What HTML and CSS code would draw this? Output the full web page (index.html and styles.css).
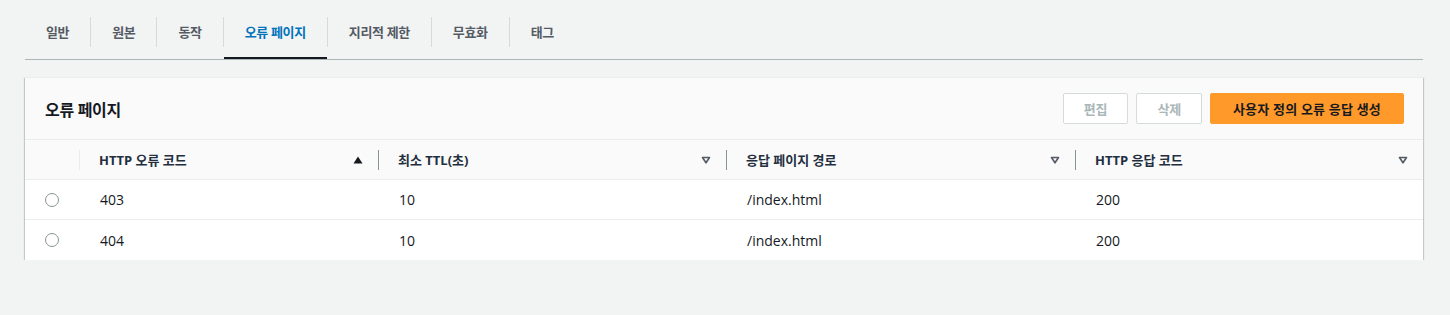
FILE: index.html
```html
<!DOCTYPE html>
<html lang="ko">
<head>
<meta charset="utf-8">
<title>오류 페이지</title>
<link rel="stylesheet" href="styles.css">
</head>
<body>
<nav class="tabs">
  <a class="tab">일반</a><span class="tab-sep"></span>
  <a class="tab">원본</a><span class="tab-sep"></span>
  <a class="tab">동작</a><span class="tab-sep"></span>
  <a class="tab active">오류 페이지</a><span class="tab-sep"></span>
  <a class="tab">지리적 제한</a><span class="tab-sep"></span>
  <a class="tab">무효화</a><span class="tab-sep"></span>
  <a class="tab">태그</a>
</nav>

<section class="card">
  <header class="card-head">
    <h2 class="card-title">오류 페이지</h2>
    <div class="actions">
      <button class="btn btn-disabled">편집</button>
      <button class="btn btn-disabled">삭제</button>
      <button class="btn btn-primary">사용자 정의 오류 응답 생성</button>
    </div>
  </header>

  <div class="grid">
    <div class="th th-select"></div>
    <div class="th"><span class="sep sep-light"></span><span class="th-label">HTTP 오류 코드</span>
      <svg class="sort" width="10" height="8" viewBox="0 0 10 8"><polygon points="0.5,7.5 5,0.5 9.5,7.5" fill="#16191f"/></svg></div>
    <div class="th"><span class="sep"></span><span class="th-label">최소 TTL(초)</span>
      <svg class="sort" width="10" height="8" viewBox="0 0 10 8"><polygon points="1.5,1.5 8.5,1.5 5,6.8" fill="none" stroke="#545b64" stroke-width="1.6" stroke-linejoin="round"/></svg></div>
    <div class="th"><span class="sep"></span><span class="th-label">응답 페이지 경로</span>
      <svg class="sort" width="10" height="8" viewBox="0 0 10 8"><polygon points="1.5,1.5 8.5,1.5 5,6.8" fill="none" stroke="#545b64" stroke-width="1.6" stroke-linejoin="round"/></svg></div>
    <div class="th"><span class="sep"></span><span class="th-label">HTTP 응답 코드</span>
      <svg class="sort" width="10" height="8" viewBox="0 0 10 8"><polygon points="1.5,1.5 8.5,1.5 5,6.8" fill="none" stroke="#545b64" stroke-width="1.6" stroke-linejoin="round"/></svg></div>

    <div class="td td-select"><span class="radio"></span></div>
    <div class="td">403</div>
    <div class="td">10</div>
    <div class="td">/index.html</div>
    <div class="td">200</div>

    <div class="td td-select last"><span class="radio"></span></div>
    <div class="td last">404</div>
    <div class="td last">10</div>
    <div class="td last">/index.html</div>
    <div class="td last">200</div>
  </div>
</section>
</body>
</html>
```

FILE: styles.css
```css
* { box-sizing: border-box; }

body {
  margin: 0;
  background: #f2f3f3;
  font-family: "Open Sans", "Noto Sans CJK KR", sans-serif;
  color: #16191f;
}

.tabs {
  display: flex;
  align-items: center;
  margin: 0 27px 0 25px;
  padding-top: 4px;
  border-bottom: 1px solid #aab7b8;
}

.tab {
  height: 55px;
  display: flex;
  align-items: center;
  padding: 0 21px;
  font-size: 13px;
  font-weight: 700;
  letter-spacing: -0.35px;
  color: #545b64;
}

.tab.active {
  color: #0073bb;
  box-shadow: inset 0 -2px 0 #16191f;
}

.tab-sep {
  width: 1px;
  height: 30px;
  background: #d5dbdb;
}

.card {
  margin: 17px 27px 0 25px;
  background: #fff;
  border-top: 1px solid #eaeded;
  box-shadow: 0 1px 1px 0 rgba(0, 28, 36, 0.3), 1px 1px 1px 0 rgba(0, 28, 36, 0.15), -1px 1px 1px 0 rgba(0, 28, 36, 0.15);
}

.card-head {
  height: 61px;
  display: flex;
  align-items: center;
  justify-content: space-between;
  padding: 0 19px 0 20px;
  background: #fafafa;
}

.card-title {
  margin: 0;
  font-size: 16px;
  font-weight: 700;
  letter-spacing: -0.3px;
  color: #16191f;
}

.actions {
  display: flex;
  gap: 8px;
}

.btn {
  height: 31px;
  padding: 0 20px;
  border: 1px solid #d5dbdb;
  border-radius: 2px;
  background: #fff;
  font-family: inherit;
  font-size: 13px;
  font-weight: 700;
  letter-spacing: -0.2px;
}

.btn-disabled {
  color: #aab7b8;
}

.btn-primary {
  background: #ff9a2a;
  border-color: #ff9a2a;
  color: #16191f;
  padding: 0 22px;
  letter-spacing: 0.2px;
}

.grid {
  display: grid;
  grid-template-columns: 54px 299px 348px 349px 1fr;
}

.th {
  height: 41px;
  display: flex;
  align-items: center;
  background: #fafafa;
  border-top: 1px solid #eaeded;
  border-bottom: 1px solid #eaeded;
  font-size: 13px;
  font-weight: 700;
  color: #232f3e;
}

.sep {
  width: 1px;
  height: 20px;
  background: #879596;
}

.sep-light {
  background: #eaeded;
}

.th-label {
  margin-left: 19px;
}

.sort {
  margin-left: auto;
  margin-right: 15px;
}

.td {
  height: 40px;
  display: flex;
  align-items: center;
  padding-left: 21px;
  border-bottom: 1px solid #eaeded;
  font-size: 14px;
  color: #16191f;
}

.td.last {
  border-bottom: none;
}

.td-select {
  padding-left: 20px;
}

.radio {
  width: 14px;
  height: 14px;
  border: 1px solid #879596;
  border-radius: 50%;
  background: #fff;
}
```
